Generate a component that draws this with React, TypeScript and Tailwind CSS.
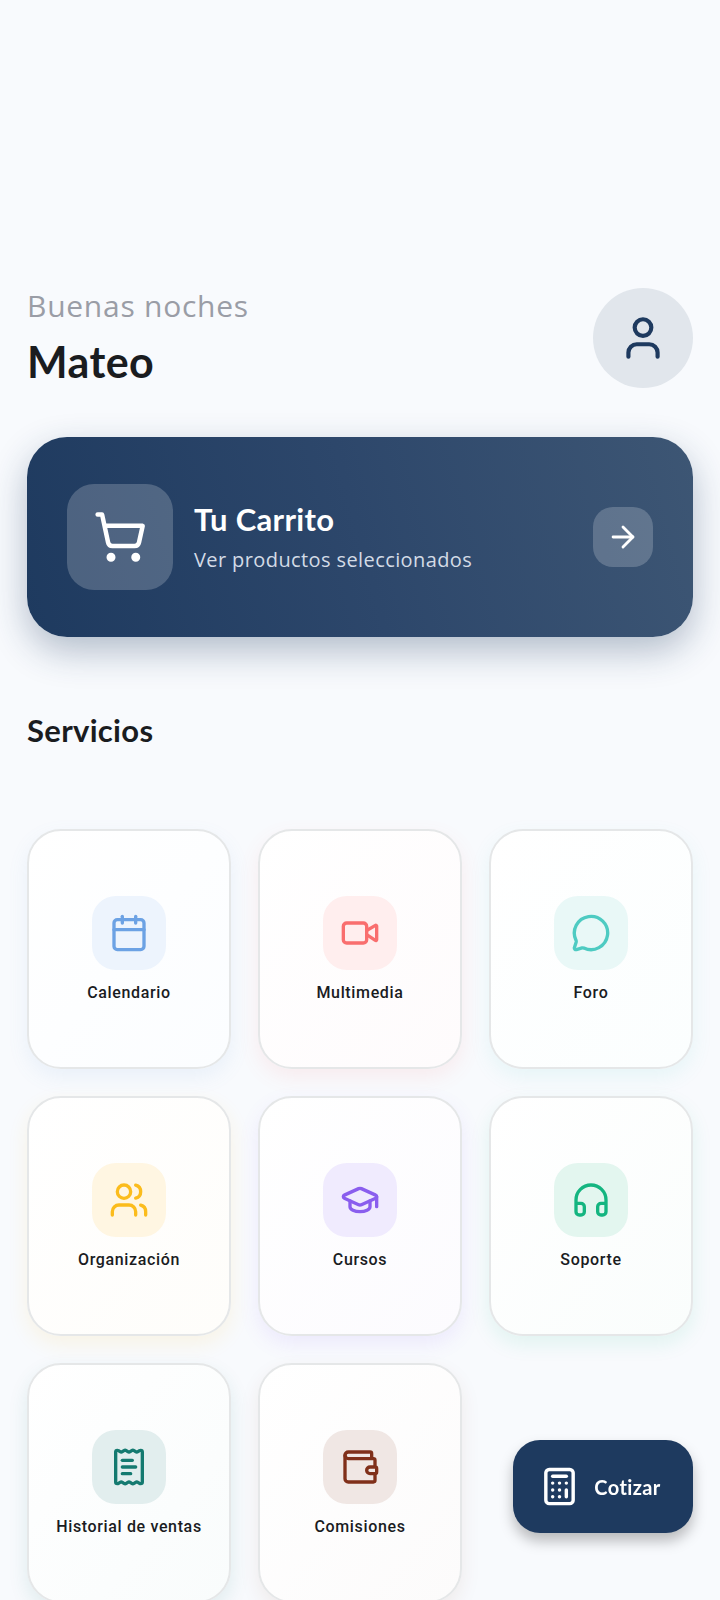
import {
  ArrowRight,
  Calculator,
  Calendar,
  GraduationCap,
  Headphones,
  MessageCircle,
  ReceiptText,
  ShoppingCart,
  User,
  Users,
  Video,
  Wallet,
  type LucideIcon,
} from "lucide-react";

type Service = {
  label: string;
  icon: LucideIcon;
  card: string;
  tile: string;
};

const services: Service[] = [
  {
    label: "Calendario",
    icon: Calendar,
    card: "to-[#fbfdff] shadow-[0_8px_20px_rgba(106,160,220,0.10)]",
    tile: "bg-[#edf4fd] text-[#6ca2e4]",
  },
  {
    label: "Multimedia",
    icon: Video,
    card: "to-[#fefbfc] shadow-[0_8px_20px_rgba(255,107,107,0.10)]",
    tile: "bg-[#ffeeee] text-[#f96e6e]",
  },
  {
    label: "Foro",
    icon: MessageCircle,
    card: "to-[#fbfefe] shadow-[0_8px_20px_rgba(78,205,196,0.10)]",
    tile: "bg-[#e9f8f7] text-[#4ecbc2]",
  },
  {
    label: "Organización",
    icon: Users,
    card: "to-[#fefdfa] shadow-[0_8px_20px_rgba(251,191,36,0.11)]",
    tile: "bg-[#fff6e2] text-[#fbbc1c]",
  },
  {
    label: "Cursos",
    icon: GraduationCap,
    card: "to-[#fcfbfe] shadow-[0_8px_20px_rgba(139,92,246,0.10)]",
    tile: "bg-[#f0ebfe] text-[#8a5eee]",
  },
  {
    label: "Soporte",
    icon: Headphones,
    card: "to-[#fafdfc] shadow-[0_8px_20px_rgba(16,185,129,0.10)]",
    tile: "bg-[#e3f6ef] text-[#14b580]",
  },
  {
    label: "Historial de ventas",
    icon: ReceiptText,
    card: "to-[#f9fcfc] shadow-[0_8px_20px_rgba(15,118,110,0.11)]",
    tile: "bg-[#e2eeee] text-[#147a70]",
  },
  {
    label: "Comisiones",
    icon: Wallet,
    card: "to-[#fcfbfb] shadow-[0_8px_20px_rgba(124,45,18,0.08)]",
    tile: "bg-[#f0e7e4] text-[#80301a]",
  },
];

function ServiceCard({ label, icon: Icon, card, tile }: Service) {
  return (
    <button
      type="button"
      className={`flex h-60 flex-col items-center justify-center gap-[13px] rounded-[34px] border-2 border-[#e5e7e8] bg-linear-to-br from-white ${card}`}
    >
      <span className={`flex size-[74px] items-center justify-center rounded-[24px] ${tile}`}>
        <Icon size={40} strokeWidth={2} aria-hidden="true" />
      </span>
      <span className="font-['Roboto',sans-serif] text-base leading-[19px] font-medium tracking-[0.04em] text-[#1a1c1f]">
        {label}
      </span>
    </button>
  );
}

export default function App() {
  return (
    <div className="h-screen overflow-y-auto bg-[#f8fafd] [scrollbar-width:none]">
      <main className="px-[27px] pt-[288px] pb-[160px]">
        <header className="flex h-[100px] items-center justify-between">
          <div>
            <p className="font-['Open_Sans',sans-serif] text-[30px] leading-9 font-normal tracking-[0.025em] text-[#9a9da6]">
              Buenas noches
            </p>
            <h1 className="mt-3 font-['Lato',sans-serif] text-[43px] leading-[52px] font-bold tracking-[0.01em] text-[#1a1c1f]">
              Mateo
            </h1>
          </div>
          <button
            type="button"
            aria-label="Perfil"
            className="flex size-[100px] items-center justify-center rounded-full bg-[#e1e6ec] text-[#1e3a5f]"
          >
            <User size={50} strokeWidth={2} aria-hidden="true" />
          </button>
        </header>

        <button
          type="button"
          className="mt-[49px] flex h-[200px] w-full items-center rounded-[40px] bg-linear-[75deg] from-[#1e3a5f] via-[#2d476b] to-[#3d5674] px-10 text-left shadow-[0_14px_36px_rgba(30,58,95,0.32)]"
        >
          <span className="flex size-[106px] shrink-0 items-center justify-center rounded-[27px] bg-white/20 text-white">
            <ShoppingCart size={54} strokeWidth={2} aria-hidden="true" />
          </span>
          <span className="ml-[21px] flex grow flex-col gap-[7px] pb-px">
            <span className="font-['Lato',sans-serif] text-[31px] leading-10 font-bold tracking-[0.01em] text-white">
              Tu Carrito
            </span>
            <span className="font-['Open_Sans',sans-serif] text-xl leading-7 font-normal tracking-[0.02em] text-[#d3dbe6]">
              Ver productos seleccionados
            </span>
          </span>
          <span className="flex size-[60px] shrink-0 items-center justify-center rounded-[20px] bg-white/20 text-white">
            <ArrowRight size={34} strokeWidth={2} aria-hidden="true" />
          </span>
        </button>

        <section aria-labelledby="servicios">
          <h2
            id="servicios"
            className="mt-[73px] font-['Lato',sans-serif] text-[31px] leading-10 font-bold tracking-[0.01em] text-[#1a1c1f]"
          >
            Servicios
          </h2>
          <div className="mt-[79px] grid grid-cols-3 gap-[27px]">
            {services.map((service) => (
              <ServiceCard key={service.label} {...service} />
            ))}
          </div>
        </section>
      </main>

      <button
        type="button"
        className="fixed right-[27px] bottom-[67px] flex h-[93px] w-[180px] items-center justify-center gap-[14px] rounded-[27px] bg-[#1e3a5f] pr-1.5 text-white shadow-[0_8px_14px_rgba(0,0,0,0.26)]"
      >
        <Calculator size={41} strokeWidth={2} aria-hidden="true" />
        <span className="font-['Lato',sans-serif] text-xl leading-7 font-bold tracking-[0.02em]">
          Cotizar
        </span>
      </button>
    </div>
  );
}
